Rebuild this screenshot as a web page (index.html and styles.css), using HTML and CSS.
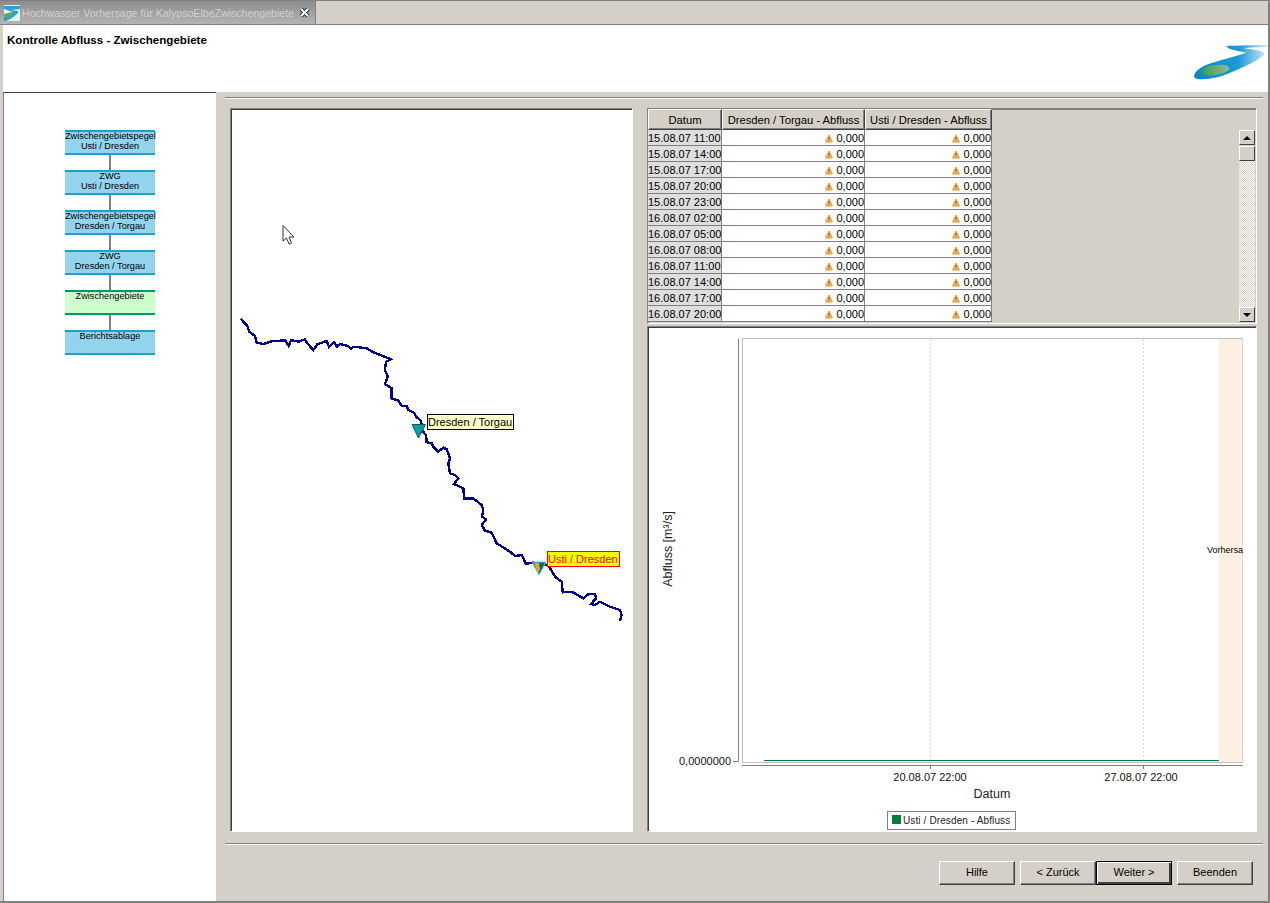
FILE: index.html
```html
<!DOCTYPE html>
<html lang="en">
<head>
    <meta charset="UTF-8">
    <title>Hochwasser Vorhersage</title>
    <link rel="stylesheet" href="styles.css">
</head>
<body>
<svg class="defs" width="0" height="0">
    <defs>
        <linearGradient id="logoBlue" x1="0" x2="1" y1="0" y2="0">
            <stop offset="0" stop-color="#0b86cc"/>
            <stop offset="0.6" stop-color="#1a9ad6"/>
            <stop offset="1" stop-color="#d5ecf7"/>
        </linearGradient>
        <linearGradient id="logoGreen" x1="0" x2="1" y1="0" y2="0">
            <stop offset="0" stop-color="#3f9a55"/>
            <stop offset="1" stop-color="#8dbb88"/>
        </linearGradient>
        <symbol id="warn" viewBox="0 0 9 9">
            <path d="M4 1 L7.500 8 L.5 8 Z" fill="#fbc25c" stroke="#e09a30" stroke-width="1" stroke-linejoin="round"/>
            <path d="M4 3 V5.600 M4 6.400 V7.400" stroke="#6b4310" stroke-width="1"/>
        </symbol>
        <symbol id="logo" viewBox="0 0 80 50">
            <path d="M38 2 C50 1.500 66 1 80 1 L80 2.700 C72 3 62 3.500 56 4.300 C64 5.500 71 6.500 74.700 7.700 C76 8.500 76.500 9.500 76 11 C70 16 61 20.500 53 24 C45 27.500 37 31.500 29.700 33.300 C22 35 15 35.500 9.700 35 C6.500 34.500 5.500 33 6.300 31 C7 29 8 27.500 9.700 26 C13 23 18 21 23 19.300 C35 15.500 47 12.500 58 8.700 C52 7.500 47 6.500 43 5.300 C41 4.500 39.500 3.500 38 2 Z" fill="url(#logoBlue)"/>
            <ellipse cx="27.300" cy="26" rx="14" ry="5" transform="rotate(-8 27.300 26)" fill="url(#logoGreen)"/>
        </symbol>
    </defs>
</svg>

<div class="window">
    <div class="tabbar">
        <div class="tab">
            <svg class="tab-icon" width="16" height="16" viewBox="0 0 16 16">
                <rect width="16" height="16" fill="#e4f2f8"/>
                <path d="M0 1 H16 V4 L7 5 L14 6 V8 L8 13 L2 16 H0 V13 L9 7 L0 4 Z" fill="#2a9fd6"/>
                <path d="M0 9 L8 7 L11 8 L6 12 L0 13 Z" fill="#5da765"/>
            </svg>
            <span class="tab-title">Hochwasser Vorhersage für KalypsoElbeZwischengebiete</span>
            <svg class="tab-close" width="11" height="11" viewBox="0 0 11 11">
                <path d="M2 2 L9 9 M9 2 L2 9" stroke="#333" stroke-width="4"/>
                <path d="M2 2 L9 9 M9 2 L2 9" stroke="#fff" stroke-width="2"/>
            </svg>
        </div>
    </div>

    <div class="header">
        <h1>Kontrolle Abfluss - Zwischengebiete</h1>
        <svg class="logo" width="80" height="50"><use href="#logo"/></svg>
    </div>

    <div class="content">
        <div class="nav">
            <div class="step">Zwischengebietspegel<br>Usti / Dresden</div>
            <div class="link"></div>
            <div class="step">ZWG<br>Usti / Dresden</div>
            <div class="link"></div>
            <div class="step">Zwischengebietspegel<br>Dresden / Torgau</div>
            <div class="link"></div>
            <div class="step">ZWG<br>Dresden / Torgau</div>
            <div class="link"></div>
            <div class="step step-active">Zwischengebiete</div>
            <div class="link"></div>
            <div class="step">Berichtsablage</div>
        </div>

        <div class="work">
            <div class="rule"></div>

            <div class="panes">
                <div class="pane map">
                    <svg class="map-svg" viewBox="231 109 401 722" width="401" height="722">
                        <!-- mouse pointer -->
                        <path d="M283 225.500 V241 L286.500 238 L289 244 L291.500 243 L289 237 L294 237 Z" fill="#fff" stroke="#333" stroke-width="1"/>
                        <polyline class="river" points="240.700,318.700 247.300,326 249.300,331.700 255,336 256.700,342.700 263.300,344 271.700,341.300 285,340.300 288.700,345.700 291.300,340 298.300,341.700 305,339.300 307.300,343.300 313.300,350 317.300,344.300 326.700,341 329,346.700 334,342.300 336.700,346.700 340,344 348.300,346 350.700,348.700 354,346.700 366.700,348.300 373.300,352.300 388.300,358.300 391,359.300 386,361.700 385,370 387.700,376.700 385,384 391.700,388.300 391.300,398.300 398.300,400.700 401.700,405.700 406.700,405.700 408.300,410 414,412.700 416.700,417.300 421,420.700 421.700,425 421.700,430 426,435 426.700,442.300 431.700,443.300 433.300,446.700 438.300,451.700 443.300,447.700 446.700,449.300 450,458.300 448.300,463.300 450,473.300 455,475 458.300,478.300 454,484 463.300,488.300 464.300,498.300 473.300,498.300 481.700,505 483.300,510 482,516.700 486,519.300 481.700,525 485,530.700 491.700,532.700 496.700,543.300 510,551.700 515,556 521.700,555 526,564 531.700,562.700 548.300,565 555,576.700 561.700,581.700 562.700,592.300 571.700,591.700 583.300,598.300 588.300,594.300 595,594 596,598.300 591,604 595,605 600,601.700 610,606.700 620,610 621.700,615 620,620.700"/>
                        <path d="M412 424.500 H425.500 L418.500 438 Z" fill="#00a3a3" stroke="#0a5a5a" stroke-width="1"/>
                        <path d="M532 562 H546 L539 575 Z" fill="#1d5f63" stroke="#2fe6e6" stroke-width="1"/>
                        <path d="M534 563 H539 L540 570 L538 573 Z" fill="#f0a030"/>
                        <rect x="532" y="561" width="2" height="2" fill="#e040a0"/>
                    </svg>
                    <div class="map-label map-label-plain">Dresden / Torgau</div>
                    <div class="map-label map-label-hot">Usti / Dresden</div>
                </div>

                <div class="right">
                    <div class="pane grid">
                        <div class="grid-wrap">
                            <table>
                                <colgroup>
                                    <col class="col-date">
                                    <col class="col-first">
                                    <col class="col-second">
                                </colgroup>
                                <tr>
                                    <th>Datum</th>
                                    <th>Dresden / Torgau - Abfluss</th>
                                    <th>Usti / Dresden - Abfluss</th>
                                </tr>
                                <tr><td class="date">15.08.07 11:00</td><td><svg class="warn"><use href="#warn"/></svg>0,000</td><td><svg class="warn"><use href="#warn"/></svg>0,000</td></tr>
                                <tr><td class="date">15.08.07 14:00</td><td><svg class="warn"><use href="#warn"/></svg>0,000</td><td><svg class="warn"><use href="#warn"/></svg>0,000</td></tr>
                                <tr><td class="date">15.08.07 17:00</td><td><svg class="warn"><use href="#warn"/></svg>0,000</td><td><svg class="warn"><use href="#warn"/></svg>0,000</td></tr>
                                <tr><td class="date">15.08.07 20:00</td><td><svg class="warn"><use href="#warn"/></svg>0,000</td><td><svg class="warn"><use href="#warn"/></svg>0,000</td></tr>
                                <tr><td class="date">15.08.07 23:00</td><td><svg class="warn"><use href="#warn"/></svg>0,000</td><td><svg class="warn"><use href="#warn"/></svg>0,000</td></tr>
                                <tr><td class="date">16.08.07 02:00</td><td><svg class="warn"><use href="#warn"/></svg>0,000</td><td><svg class="warn"><use href="#warn"/></svg>0,000</td></tr>
                                <tr><td class="date">16.08.07 05:00</td><td><svg class="warn"><use href="#warn"/></svg>0,000</td><td><svg class="warn"><use href="#warn"/></svg>0,000</td></tr>
                                <tr><td class="date">16.08.07 08:00</td><td><svg class="warn"><use href="#warn"/></svg>0,000</td><td><svg class="warn"><use href="#warn"/></svg>0,000</td></tr>
                                <tr><td class="date">16.08.07 11:00</td><td><svg class="warn"><use href="#warn"/></svg>0,000</td><td><svg class="warn"><use href="#warn"/></svg>0,000</td></tr>
                                <tr><td class="date">16.08.07 14:00</td><td><svg class="warn"><use href="#warn"/></svg>0,000</td><td><svg class="warn"><use href="#warn"/></svg>0,000</td></tr>
                                <tr><td class="date">16.08.07 17:00</td><td><svg class="warn"><use href="#warn"/></svg>0,000</td><td><svg class="warn"><use href="#warn"/></svg>0,000</td></tr>
                                <tr><td class="date">16.08.07 20:00</td><td><svg class="warn"><use href="#warn"/></svg>0,000</td><td><svg class="warn"><use href="#warn"/></svg>0,000</td></tr>
                            </table>
                        </div>
                        <div class="scrollbar">
                            <div class="sb-btn"><span class="arrow-up"></span></div>
                            <div class="sb-thumb"></div>
                            <div class="sb-track"></div>
                            <div class="sb-btn"><span class="arrow-down"></span></div>
                        </div>
                    </div>

                    <div class="pane chart">
                        <svg viewBox="648 327 608 504" width="608" height="504">
                            <rect class="plot" x="742.500" y="338.500" width="500" height="424"/>
                            <rect class="forecast" x="1219" y="339" width="23.500" height="423"/>
                            <path class="gridline" d="M930.500 339 V762 M1143.500 339 V762"/>
                            <path class="axis" d="M738.500 339 V761.500 H733 M742 765.500 H1243 M930.500 765.500 V769 M1143.500 765.500 V769"/>
                            <path class="series" d="M764 760.500 H1219"/>
                            <text class="tick" x="731" y="765" text-anchor="end">0,0000000</text>
                            <text class="tick" x="930" y="781" text-anchor="middle">20.08.07 22:00</text>
                            <text class="tick" x="1141" y="781" text-anchor="middle">27.08.07 22:00</text>
                            <text class="title" x="992" y="798" text-anchor="middle">Datum</text>
                            <text class="title" transform="translate(672 549) rotate(-90)" text-anchor="middle">Abfluss [m³/s]</text>
                            <text class="note" x="1207" y="553">Vorhersa</text>
                            <rect class="legend" x="887.500" y="811.500" width="128" height="18"/>
                            <rect class="swatch" x="892" y="815" width="9" height="9"/>
                            <text class="legend-text" x="903" y="824">Usti / Dresden - Abfluss</text>
                        </svg>
                    </div>
                </div>
            </div>

            <div class="rule rule-low"></div>

            <div class="buttons">
                <button>Hilfe</button>
                <div class="button-pair">
                    <button>&lt; Zurück</button>
                    <button class="default">Weiter &gt;</button>
                </div>
                <button>Beenden</button>
            </div>
        </div>
    </div>
</div>
</body>
</html>
```

FILE: styles.css
```css
* {
    box-sizing: border-box;
}

html, body {
    margin: 0;
    height: 903px;
    overflow: hidden;
}

body {
    font-family: "Liberation Sans", Arial, sans-serif;
    font-size: 11px;
    color: black;
    background-color: #d4d0c8;
}

.defs {
    position: absolute;
}

.window {
    height: 903px;
    display: flex;
    flex-direction: column;
    border-right: 2px solid #808080;
    border-bottom: 2px solid #808080;
}

/* tab strip */
.tabbar {
    height: 25px;
    border-top: 1px solid #808080;
    border-bottom: 1px solid #808080;
}

.tab {
    width: 316px;
    height: 23px;
    padding-left: 4px;
    display: flex;
    align-items: center;
    background: linear-gradient(#8c8c8c, #b4b4b4);
    border-right: 1px solid #808080;
}

.tab-icon {
    flex: none;
}

.tab-title {
    margin-left: 2px;
    color: #d4d0c8;
    font-size: 10.6px;
    white-space: nowrap;
}

.tab-close {
    margin-left: 5px;
    flex: none;
}

/* header */
.header {
    height: 67px;
    margin-left: 3px;
    background-color: white;
    position: relative;
    padding: 8px 4px;
}

.header h1 {
    margin: 0;
    font-size: 11.6px;
    font-weight: bold;
}

.logo {
    position: absolute;
    right: 0;
    top: 19px;
}

.content {
    flex: 1;
    display: flex;
}

/* process chain */
.nav {
    width: 213px;
    margin-left: 3px;
    padding: 37px 0 0 61px;
    background-color: white;
    border-top: 1px solid #404040;
    border-left: 1px solid #808080;
}

.step {
    width: 90px;
    height: 25px;
    background-color: #92d4ee;
    border-top: 2px solid #1f9fd0;
    border-bottom: 2px solid #1f9fd0;
    font-size: 9.2px;
    line-height: 10px;
    text-align: center;
    white-space: nowrap;
}

/* pulls the label up a pixel, it sits against the top border */
.step::before {
    content: "";
    display: block;
    margin-top: -1px;
}

.step-active {
    background-color: #ccffcc;
    border-color: #009966;
}

.link {
    width: 2px;
    height: 15px;
    margin-left: 44px;
    background-color: #808080;
}

/* right side */
.work {
    flex: 1;
    padding: 5px 5px 0 9px;
}

.rule {
    height: 2px;
    border-top: 1px solid #808080;
    border-bottom: 1px solid white;
}

.rule-low {
    margin-top: 11px;
}

.panes {
    margin: 9px 0 0 5px;
    height: 724px;
    display: grid;
    grid-template-columns: 403px 610px;
    column-gap: 14px;
}

.pane {
    background-color: white;
    border: 1px solid;
    border-color: #808080 white white #808080;
    box-shadow: inset 1px 1px 0 #404040;
}

.map {
    position: relative;
}

.map-svg {
    display: block;
}

.river {
    fill: none;
    stroke: #000099;
    stroke-width: 2.4;
    shape-rendering: crispEdges;
}

.map-label {
    position: absolute;
    font-size: 11px;
    height: 16px;
    line-height: 14px;
    padding: 0 1px 0 0;
    white-space: nowrap;
    border: 1px solid black;
}

.map-label-plain {
    left: 196px;
    top: 305px;
    background-color: #ffffcc;
}

.map-label-hot {
    left: 316px;
    top: 442px;
    color: red;
    background-color: yellow;
    border-color: red;
}

.right {
    display: flex;
    flex-direction: column;
    row-gap: 2px;
}

/* table */
.grid {
    height: 216px;
    display: flex;
    background-color: #d4d0c8;
    overflow: hidden;
    box-shadow: inset 1px 1px 0 #808080;
}

.grid-wrap {
    flex: 1;
    height: 214px;
    overflow: hidden;
}

table {
    width: 344px;
    table-layout: fixed;
    border-collapse: separate;
    border-spacing: 0;
    background-color: white;
}

.col-date {
    width: 74px;
}

.col-first {
    width: 143px;
}

.col-second {
    width: 127px;
}

th {
    height: 21px;
    padding: 0;
    font-weight: normal;
    font-size: 11.2px;
    background-color: #d4d0c8;
    border: 1px solid;
    border-color: white #404040 #404040 white;
    box-shadow: inset -1px -1px 0 #808080;
    white-space: nowrap;
}

td {
    height: 16px;
    padding: 1px 0 0 0;
    font-size: 11px;
    line-height: 14px;
    text-align: right;
    white-space: nowrap;
    border-right: 1px solid #808080;
    border-bottom: 1px solid #808080;
}

.date {
    padding: 1px 0 0 0;
    text-align: left;
    background-color: #dedede;
}

.warn {
    width: 9px;
    height: 9px;
    margin-right: 2px;
    vertical-align: -1px;
}

/* scrollbar */
.scrollbar {
    width: 16px;
    height: 192px;
    margin: 21px 1px 0 0;
    display: flex;
    flex-direction: column;
}

.sb-btn, .sb-thumb {
    height: 15px;
    flex: none;
    display: flex;
    align-items: center;
    justify-content: center;
    background-color: #d4d0c8;
    border: 1px solid;
    border-color: white #404040 #404040 white;
}

.sb-thumb {
    margin-top: 1px;
}

.sb-track {
    flex: 1;
    background: repeating-conic-gradient(#ffffff 0 25%, #d4d0c8 0 50%) 0 0 / 2px 2px;
}

.arrow-up {
    border: 4px solid transparent;
    border-top: 0;
    border-bottom-color: black;
}

.arrow-down {
    border: 4px solid transparent;
    border-bottom: 0;
    border-top-color: black;
}

/* chart */
.chart {
    flex: 1;
}

.chart svg {
    display: block;
}

.plot {
    fill: white;
    stroke: #c0c0c0;
}

.forecast {
    fill: #fdf0e0;
}

.gridline {
    stroke: #dcdcdc;
    stroke-dasharray: 2 2;
    fill: none;
}

.axis {
    stroke: #808080;
    fill: none;
}

.series {
    stroke: #008040;
    fill: none;
}

.tick {
    font-size: 11px;
    fill: #111;
}

.title {
    font-size: 12.5px;
    fill: #222;
}

.note {
    font-size: 9px;
    fill: black;
}

.legend {
    fill: white;
    stroke: #808080;
}

.swatch {
    fill: #008040;
}

.legend-text {
    font-size: 10px;
    fill: #222;
    letter-spacing: .12px;
}

/* wizard buttons */
.buttons {
    margin: 16px 10px 0 0;
    display: flex;
    justify-content: flex-end;
    column-gap: 5px;
}

.button-pair {
    display: flex;
}

button {
    width: 76px;
    height: 24px;
    padding: 0 0 2px;
    font-family: inherit;
    font-size: 11px;
    color: black;
    background-color: #d4d0c8;
    border: 1px solid;
    border-color: white #404040 #404040 white;
    box-shadow: inset -1px -1px 0 #808080;
}

button.default {
    border: 1px solid black;
    box-shadow: inset 1px 1px 0 white, inset -2px -2px 0 #404040;
}
```
